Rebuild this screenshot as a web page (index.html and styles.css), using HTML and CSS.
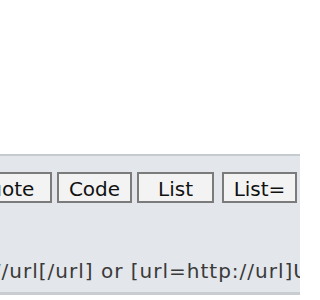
FILE: index.html
```html
<!DOCTYPE html>
<html>
<head>
<meta charset="utf-8">
<link rel="stylesheet" href="styles.css">
</head>
<body>
<div class="page">
  <div class="editor"></div>
  <div class="panel">
    <div class="toolbar">
      <button class="btn w-quote">Quote</button>
      <button class="btn w-code">Code</button>
      <button class="btn w-list">List</button>
      <button class="btn w-liste">List=</button>
      <button class="btn w-img">Img</button>
    </div>
    <p class="hint">[url]http://url[/url] or [url=http://url]URL text[/url]</p>
  </div>
</div>
</body>
</html>
```

FILE: styles.css
```css
html, body {
  margin: 0;
  padding: 0;
  background: #ffffff;
}
.page {
  width: 300px;
  height: 300px;
  overflow: hidden;
  display: flex;
  flex-direction: column;
  font-family: "DejaVu Sans", Verdana, sans-serif;
}
.editor {
  height: 154px;
  flex: none;
  background: #ffffff;
}
.panel {
  flex: none;
  background: #e3e6ea;
  border-top: 2px solid #c6cbd0;
  border-bottom: 3px solid #c9cdd1;
  padding: 16px 0 9px 0;
  overflow: hidden;
}
.toolbar {
  display: flex;
  gap: 5px;
  margin-left: -44px;
  white-space: nowrap;
}
.btn {
  flex: none;
  height: 31px;
  border: 2px solid #7b7b7b;
  background: #f3f3f3;
  color: #111111;
  font-family: "DejaVu Sans", Verdana, sans-serif;
  font-size: 20px;
  padding: 3px 0 0 0;
  margin: 0;
  text-align: center;
  line-height: 24px;
}
.w-quote { width: 96px; }
.w-code { width: 75px; }
.w-list { width: 77px; }
.w-liste { width: 75px; margin-left: 3px; }
.w-img { width: 75px; }
.hint {
  margin: 56px 0 0 -106px;
  font-size: 20px;
  line-height: 24px;
  letter-spacing: 1px;
  color: #3a3a3a;
  white-space: nowrap;
}
```
